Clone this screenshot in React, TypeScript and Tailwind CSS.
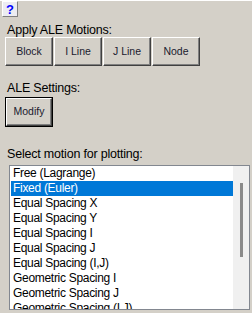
import React from "react";

const items = [
  "Free (Lagrange)",
  "Fixed (Euler)",
  "Equal Spacing X",
  "Equal Spacing Y",
  "Equal Spacing I",
  "Equal Spacing J",
  "Equal Spacing (I,J)",
  "Geometric Spacing I",
  "Geometric Spacing J",
  "Geometric Spacing (I,J)",
];

function Btn({ label }: { label: string }) {
  return (
    <div className="w-[48px] h-[29px] flex items-center justify-center border border-t-white border-l-white border-r-[#404040] border-b-[#404040] shadow-[inset_-1px_-1px_#808080] bg-[#d4d0c8] text-[10.5px] text-[#1a1a2e]">
      {label}
    </div>
  );
}

export default function App() {
  return (
    <div
      className="w-[252px] h-[313px] bg-[#d4d0c8] border-t border-white flex flex-col overflow-hidden text-black"
      style={{ fontFamily: '"Liberation Sans", Arial, sans-serif' }}
    >
      <div className="ml-[2px] w-[16px] h-[16px] flex items-center justify-center bg-[#ececf2] border border-t-white border-l-white border-r-[#808080] border-b-[#808080] text-[13px] font-bold text-[#0000ff] leading-none">
        ?
      </div>
      <div className="mt-[7px] ml-[7px] text-[12.5px] leading-[13px] tracking-[-0.2px]">Apply ALE Motions:</div>
      <div className="ml-[5px] flex gap-[1px]">
        <Btn label="Block" />
        <Btn label="I Line" />
        <Btn label="J Line" />
        <Btn label="Node" />
      </div>
      <div className="mt-[16px] ml-[7px] text-[12.5px] leading-[13px] tracking-[-0.2px]">ALE Settings:</div>
      <div className="mt-[2px] ml-[5px] w-[48px] h-[30px] border border-black">
        <div className="w-full h-full flex items-center justify-center border border-t-white border-l-white border-r-[#404040] border-b-[#404040] shadow-[inset_-1px_-1px_#808080] text-[10.5px] text-[#1a1a2e]">
          Modify
        </div>
      </div>
      <div className="mt-[21px] ml-[7px] text-[12.5px] leading-[13px] tracking-[-0.2px]">Select motion for plotting:</div>
      <div className="mt-[4px] ml-[9px] w-[241px] h-[145px] border border-[#828790] bg-white flex">
        <div className="flex-1 pl-[1px] overflow-hidden">
          {items.map((it, i) => (
            <div
              key={it}
              className={
                i === 1
                  ? "h-[15px] leading-[15px] pl-[2px] text-[12px] tracking-[-0.3px] whitespace-nowrap bg-[#0078d7] text-white"
                  : "h-[15px] leading-[15px] pl-[2px] text-[12px] tracking-[-0.3px] whitespace-nowrap"
              }
            >
              {it}
            </div>
          ))}
        </div>
        <div className="w-[16px] h-full bg-[#f0f0f0] flex justify-center">
          <div className="mt-[17px] w-[3px] h-[74px] bg-[#8a8a8a]" />
        </div>
      </div>
    </div>
  );
}
